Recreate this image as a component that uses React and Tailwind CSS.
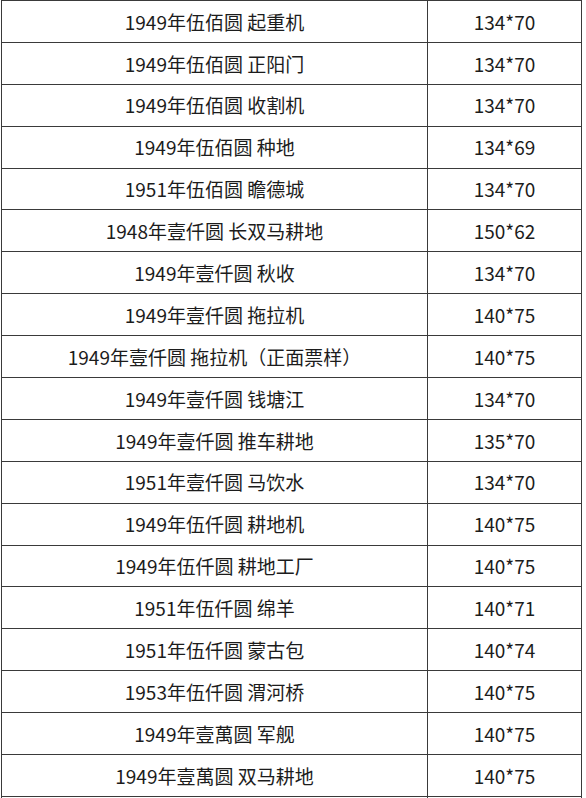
import React from 'react';

const rows = [
    ['1949年伍佰圆 起重机', '134*70'],
    ['1949年伍佰圆 正阳门', '134*70'],
    ['1949年伍佰圆 收割机', '134*70'],
    ['1949年伍佰圆 种地', '134*69'],
    ['1951年伍佰圆 瞻德城', '134*70'],
    ['1948年壹仟圆 长双马耕地', '150*62'],
    ['1949年壹仟圆 秋收', '134*70'],
    ['1949年壹仟圆 拖拉机', '140*75'],
    ['1949年壹仟圆 拖拉机（正面票样）', '140*75'],
    ['1949年壹仟圆 钱塘江', '134*70'],
    ['1949年壹仟圆 推车耕地', '135*70'],
    ['1951年壹仟圆 马饮水', '134*70'],
    ['1949年伍仟圆 耕地机', '140*75'],
    ['1949年伍仟圆 耕地工厂', '140*75'],
    ['1951年伍仟圆 绵羊', '140*71'],
    ['1951年伍仟圆 蒙古包', '140*74'],
    ['1953年伍仟圆 渭河桥', '140*75'],
    ['1949年壹萬圆 军舰', '140*75'],
    ['1949年壹萬圆 双马耕地', '140*75'],
    // next row only shows its borders at the bottom edge
    ['', ''],
];

const App = () => {
    return (
        <div className="h-[798px] overflow-hidden bg-white">
            <div
                className="ml-px w-[581px] border-t border-l border-r border-[#3a3a3a] text-[19px] text-[#1c1c1c]"
                style={{ fontFamily: '"Noto Sans CJK SC", "Noto Sans", sans-serif' }}
            >
                {rows.map(([name, size], i) => (
                    <div key={i} className="flex h-[41.9px] border-b border-[#3a3a3a]">
                        <div className="flex w-[426px] items-center justify-center border-r border-[#3a3a3a] pt-px">
                            {name}
                        </div>
                        <div className="flex flex-1 items-center justify-center pt-px">
                            {size}
                        </div>
                    </div>
                ))}
            </div>
        </div>
    );
};

export default App;
